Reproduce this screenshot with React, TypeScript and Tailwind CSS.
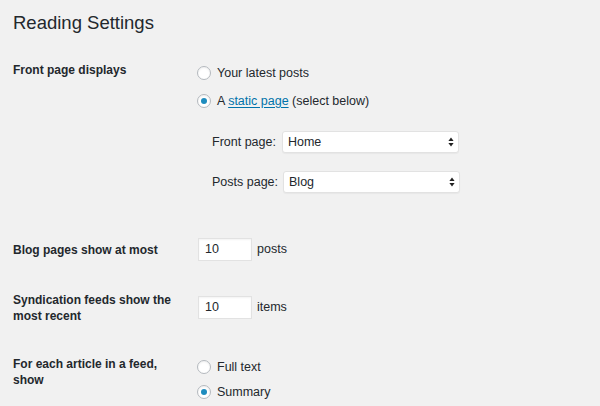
import React from 'react';

function Radio({ checked = false, children }: { checked?: boolean; children: React.ReactNode }) {
    return (
        <label className="flex items-center h-[20px] gap-[6px] text-[12.5px]">
            <span className="w-[14px] h-[14px] rounded-full border border-[#b4b9be] bg-white shadow-[inset_0_1px_2px_rgba(0,0,0,0.07)] flex items-center justify-center shrink-0">
                {checked && <span className="w-[6px] h-[6px] rounded-full bg-[#1e8cbe]" />}
            </span>
            <span>{children}</span>
        </label>
    );
}

function Select({ value }: { value: string }) {
    return (
        <div className="w-[177px] h-[22px] bg-white rounded-[3px] border border-[#e2e2e2] shadow-[0_1px_1px_rgba(0,0,0,0.04)] flex items-center justify-between pl-[5px] pr-[4px] text-[12.5px]">
            <span>{value}</span>
            <svg width="6" height="10" viewBox="0 0 6 10">
                <path d="M3 0.5 L5.6 4 L0.4 4 Z" fill="#222" />
                <path d="M3 9.5 L5.6 6 L0.4 6 Z" fill="#222" />
            </svg>
        </div>
    );
}

function NumberBox({ value }: { value: string }) {
    return (
        <div className="w-[54px] h-[23px] bg-white border border-[#e2e2e2] shadow-[inset_0_1px_2px_rgba(0,0,0,0.05)] flex items-center pl-[6px] text-[12.5px]">
            {value}
        </div>
    );
}

export default function App() {
    return (
        <div className="min-h-screen bg-[#f1f1f1] text-[#23282d] font-['Liberation_Sans',Arial,sans-serif] pl-[13px]">
            <h1 className="text-[18.5px] leading-[22px] pt-[12px]">Reading Settings</h1>

            {/* Front page displays */}
            <div className="flex items-start mt-[28px]">
                <div className="w-[184px] shrink-0 text-[12px] font-bold leading-[16px]">Front page displays</div>
                <div className="pt-[1px]">
                    <Radio>Your latest posts</Radio>
                    <div className="mt-[8px]">
                        <Radio checked>
                            A <span className="text-[#0073aa] underline underline-offset-2">static page</span> (select below)
                        </Radio>
                    </div>
                    <div className="pl-[15px] mt-[20px] text-[12.5px]">
                        <div className="flex items-center gap-[6px]">
                            <span>Front page:</span>
                            <Select value="Home" />
                        </div>
                        <div className="flex items-center gap-[5px] mt-[18px]">
                            <span>Posts page:</span>
                            <Select value="Blog" />
                        </div>
                    </div>
                </div>
            </div>

            {/* Blog pages */}
            <div className="flex items-center mt-[45px]">
                <div className="w-[185px] shrink-0 text-[12px] font-bold leading-[16px]">Blog pages show at most</div>
                <NumberBox value="10" />
                <span className="ml-[5px] text-[12.5px]">posts</span>
            </div>

            {/* Syndication */}
            <div className="flex items-start mt-[31px]">
                <div className="w-[185px] shrink-0 text-[12px] font-bold leading-[16px]">
                    Syndication feeds show the<br />most recent
                </div>
                <div className="flex items-center mt-[4px]">
                    <NumberBox value="10" />
                    <span className="ml-[5px] text-[12.5px]">items</span>
                </div>
            </div>

            {/* Feed article */}
            <div className="flex items-start mt-[32px]">
                <div className="w-[184px] shrink-0 text-[12px] font-bold leading-[16px]">
                    For each article in a feed,<br />show
                </div>
                <div className="pt-[1px]">
                    <Radio>Full text</Radio>
                    <div className="mt-[5px]">
                        <Radio checked>Summary</Radio>
                    </div>
                </div>
            </div>
        </div>
    );
}
